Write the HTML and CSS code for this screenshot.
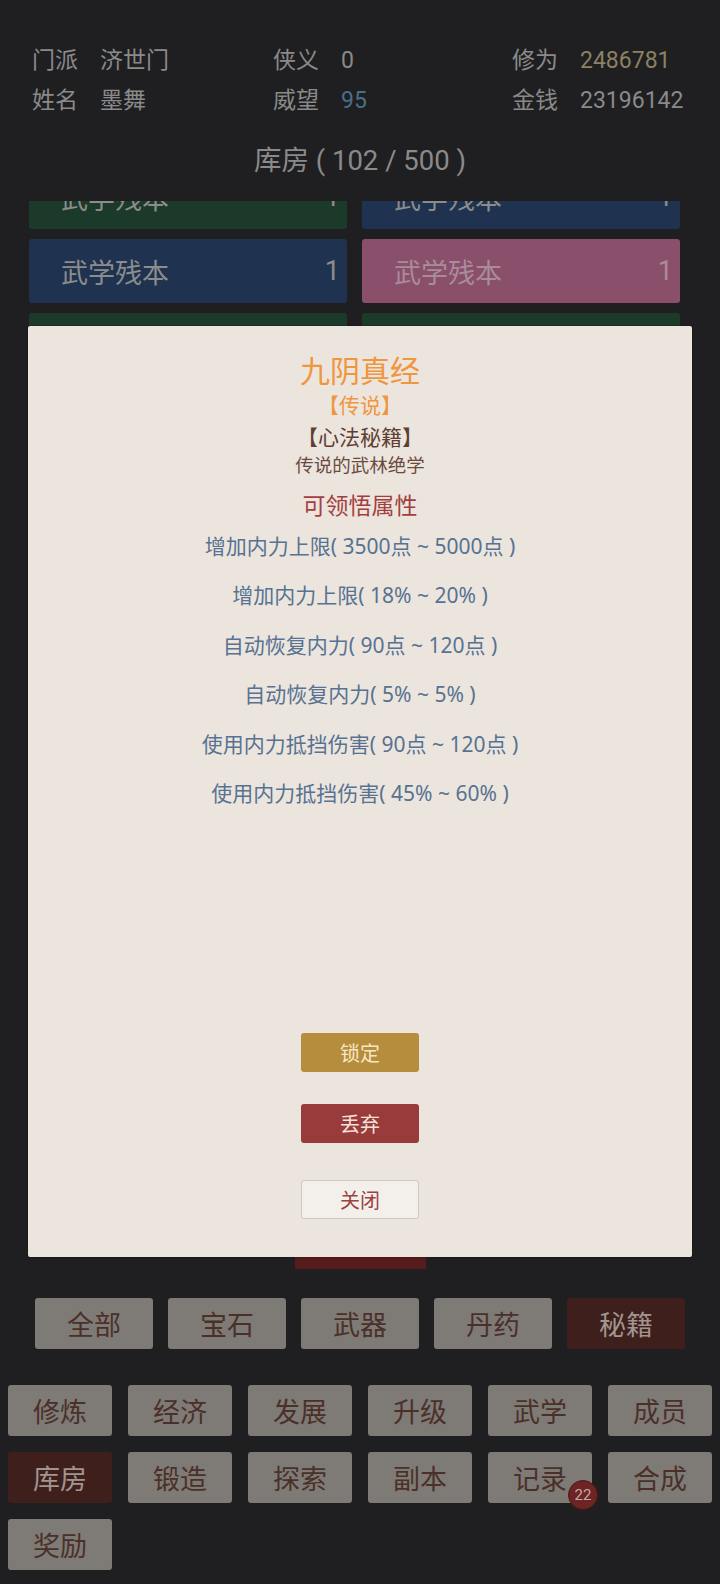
FILE: index.html
```html
<!DOCTYPE html>
<html>
  <head>
    <meta charset="utf-8">
    <title>库房</title>
    <link rel="stylesheet" href="styles.css">
  </head>
  <body>
    <div class="page">
      <div class="info">
        <div class="cell"><span class="label">门派</span><span class="value">济世门</span></div>
        <div class="cell"><span class="label">侠义</span><span class="value">0</span></div>
        <div class="cell"><span class="label">修为</span><span class="value tan">2486781</span></div>
        <div class="cell"><span class="label">姓名</span><span class="value">墨舞</span></div>
        <div class="cell"><span class="label">威望</span><span class="value blue">95</span></div>
        <div class="cell"><span class="label">金钱</span><span class="value">23196142</span></div>
      </div>

      <div class="title">库房 ( 102 / 500 )</div>

      <div class="store">
        <div class="items">
          <div class="item green"><span>武学残本</span><span>1</span></div>
          <div class="item blue"><span>武学残本</span><span>1</span></div>
          <div class="item blue"><span>武学残本</span><span>1</span></div>
          <div class="item pink"><span>武学残本</span><span>1</span></div>
          <div class="item green"><span>武学残本</span><span>1</span></div>
          <div class="item green"><span>武学残本</span><span>1</span></div>
          <div class="item blue"><span>武学残本</span><span>1</span></div>
          <div class="item green"><span>武学残本</span><span>1</span></div>
          <div class="item green"><span>武学残本</span><span>1</span></div>
          <div class="item blue"><span>武学残本</span><span>1</span></div>
          <div class="item pink"><span>武学残本</span><span>1</span></div>
          <div class="item green"><span>武学残本</span><span>1</span></div>
          <div class="item blue"><span>武学残本</span><span>1</span></div>
          <div class="item green"><span>武学残本</span><span>1</span></div>
          <div class="item green"><span>武学残本</span><span>1</span></div>
          <div class="item blue"><span>武学残本</span><span>1</span></div>
          <div class="item blue"><span>武学残本</span><span>1</span></div>
          <div class="item green"><span>武学残本</span><span>1</span></div>
          <div class="item green"><span>武学残本</span><span>1</span></div>
          <div class="item pink"><span>武学残本</span><span>1</span></div>
          <div class="item blue"><span>武学残本</span><span>1</span></div>
          <div class="item green"><span>武学残本</span><span>1</span></div>
          <div class="item green"><span>武学残本</span><span>1</span></div>
          <div class="item blue"><span>武学残本</span><span>1</span></div>
          <div class="item blue"><span>武学残本</span><span>1</span></div>
          <div class="item green"><span>武学残本</span><span>1</span></div>
        </div>
      </div>

      <div class="sell-row">
        <button class="sell">出售</button>
      </div>

      <div class="tabs">
        <button class="tab">全部</button>
        <button class="tab">宝石</button>
        <button class="tab">武器</button>
        <button class="tab">丹药</button>
        <button class="tab active">秘籍</button>
      </div>

      <div class="nav">
        <button class="tab">修炼</button>
        <button class="tab">经济</button>
        <button class="tab">发展</button>
        <button class="tab">升级</button>
        <button class="tab">武学</button>
        <button class="tab">成员</button>
        <button class="tab active">库房</button>
        <button class="tab">锻造</button>
        <button class="tab">探索</button>
        <button class="tab">副本</button>
        <button class="tab">记录<span class="badge">22</span></button>
        <button class="tab">合成</button>
        <button class="tab">奖励</button>
      </div>
    </div>

    <div class="modal">
      <div class="name">九阴真经</div>
      <div class="rarity">【传说】</div>
      <div class="kind">【心法秘籍】</div>
      <div class="desc">传说的武林绝学</div>
      <div class="attr-title">可领悟属性</div>
      <div class="attrs">
        <div>增加内力上限( 3500点 ~ 5000点 )</div>
        <div>增加内力上限( 18% ~ 20% )</div>
        <div>自动恢复内力( 90点 ~ 120点 )</div>
        <div>自动恢复内力( 5% ~ 5% )</div>
        <div>使用内力抵挡伤害( 90点 ~ 120点 )</div>
        <div>使用内力抵挡伤害( 45% ~ 60% )</div>
      </div>
      <div class="actions">
        <button class="btn lock">锁定</button>
        <button class="btn drop">丢弃</button>
        <button class="btn close">关闭</button>
      </div>
    </div>
  </body>
</html>
```

FILE: styles.css
```css
body {
  margin: 0;
  background: #1f1f21;
  font-family: Roboto, "Noto Sans CJK SC", sans-serif;
  color: #8a8a8a;
}
button {
  font-family: inherit;
  border: none;
  padding: 0;
}
.page {
  width: 720px;
  height: 1584px;
  position: relative;
  overflow: hidden;
}
.info {
  display: grid;
  grid-template-columns: 241px 239px auto;
  padding: 41px 0 0 32px;
  font-size: 23px;
  line-height: 40px;
}
.cell .label {
  display: inline-block;
  width: 68px;
}
.value.tan {
  color: #8c8163;
}
.value.blue {
  color: #4b6e8a;
}
.title {
  text-align: center;
  font-size: 27.5px;
  line-height: 40px;
  margin-top: 20px;
}
.store {
  margin-top: 20px;
  height: 998px;
  overflow: hidden;
}
.items {
  margin: -36px 40px 0 29px;
  display: grid;
  grid-template-columns: 318px 318px;
  column-gap: 15px;
  row-gap: 10px;
}
.item {
  height: 64px;
  border-radius: 3px;
  display: flex;
  justify-content: space-between;
  align-items: center;
  padding: 0 7px 0 32px;
  font-size: 27px;
  color: #8c8c8c;
}
.item.green {
  background: #1c3a2a;
}
.item.blue {
  background: #1f3350;
}
.item.pink {
  background: #8a4f6b;
  color: #a98c9b;
}
.sell-row {
  display: flex;
  justify-content: center;
  margin-top: 10px;
}
.sell {
  width: 131px;
  height: 60px;
  background: #551c1b;
  color: #a08a8a;
  font-size: 22px;
}
.tabs {
  display: flex;
  justify-content: center;
  gap: 15px;
  margin-top: 29px;
}
.tabs .tab {
  width: 118px;
}
.tab {
  height: 51px;
  background: #7e7b77;
  color: #4b3029;
  font-size: 27px;
  border-radius: 3px;
  position: relative;
}
.tab.active {
  background: #3f1f1b;
  color: #a0958f;
}
.nav {
  display: grid;
  grid-template-columns: repeat(6, 104px);
  column-gap: 16px;
  row-gap: 16px;
  padding: 0 8px;
  margin-top: 36px;
}
.badge {
  position: absolute;
  left: 80px;
  top: 28px;
  width: 28px;
  height: 28px;
  border-radius: 50%;
  border: 1px solid #4d1717;
  background: #6d2424;
  color: #c2a9a9;
  font-size: 15px;
  line-height: 28px;
  text-align: center;
}
.modal {
  position: absolute;
  left: 28px;
  top: 326px;
  width: 664px;
  height: 931px;
  box-sizing: border-box;
  padding: 24px 0 38px;
  background: #ebe5de;
  border-radius: 2px;
  box-shadow: 0 0 2px rgba(0, 0, 0, 0.5);
  display: flex;
  flex-direction: column;
  align-items: center;
  text-align: center;
  font-family: "Noto Sans", "Noto Sans CJK SC", sans-serif;
}
.name {
  font-size: 30px;
  line-height: 42px;
  color: #f0963e;
}
.rarity {
  font-size: 21px;
  line-height: 26px;
  color: #f0963e;
}
.kind {
  font-size: 21px;
  line-height: 28px;
  margin-top: 5px;
  color: #5e3e32;
}
.desc {
  font-size: 18.5px;
  line-height: 28px;
  color: #6b4a3e;
}
.attr-title {
  font-size: 23px;
  line-height: 34px;
  margin-top: 9px;
  color: #a3403f;
}
.attrs {
  font-size: 21px;
  line-height: 49.4px;
  color: #587291;
}
.actions {
  margin-top: auto;
  display: flex;
  flex-direction: column;
  align-items: center;
}
.btn {
  width: 118px;
  height: 39px;
  border-radius: 3px;
  font-size: 20px;
}
.btn.lock {
  background: #b68c3d;
  color: #f6e7c4;
}
.btn.drop {
  background: #993b3b;
  color: #f4e2da;
  margin-top: 32px;
}
.btn.close {
  background: #f3f0ec;
  border: 1px solid #cdc8c2;
  color: #9c4242;
  margin-top: 37px;
}
```
